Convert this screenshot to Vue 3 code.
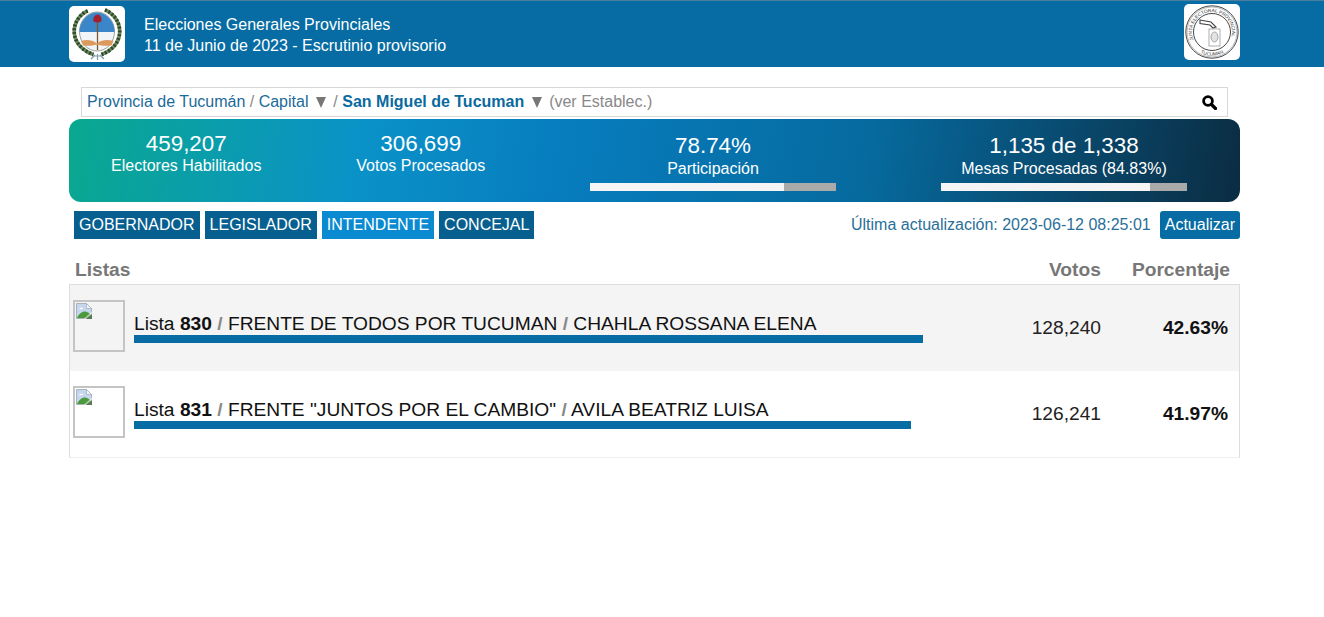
<script setup>
const stats = [
  { id: 'e', value: '459,207', label: 'Electores Habilitados', cls: 's1' },
  { id: 'v', value: '306,699', label: 'Votos Procesados', cls: 's2' },
  { id: 'p', value: '78.74%', label: 'Participación', cls: 's3', bar: 78.74 },
  { id: 'm', value: '1,135 de 1,338', label: 'Mesas Procesadas (84.83%)', cls: 's4', bar: 84.83 },
]
const tabs = [
  { t: 'GOBERNADOR' },
  { t: 'LEGISLADOR' },
  { t: 'INTENDENTE', active: true },
  { t: 'CONCEJAL' },
]
const rows = [
  { n: '830', party: 'FRENTE DE TODOS POR TUCUMAN', who: 'CHAHLA ROSSANA ELENA', votes: '128,240', pct: '42.63%', w: 789, alt: true },
  { n: '831', party: 'FRENTE "JUNTOS POR EL CAMBIO"', who: 'AVILA BEATRIZ LUISA', votes: '126,241', pct: '41.97%', w: 777, alt: false },
]
</script>

<template>
  <div class="page">
    <header class="top">
      <div class="wrap head">
        <div class="logo">
          <svg width="56" height="56" viewBox="0 0 56 56">
            <ellipse cx="28" cy="25.500" rx="17.500" ry="19.500" fill="#f2f5f7" stroke="#6a7a6a" stroke-width="0.7" />
            <path d="M10.500 26a17.500 19.500 0 0 1 35 0z" fill="#3a86c8" />
            <path d="M28.500 15v29" stroke="#7a5a2a" stroke-width="1.300" />
            <path d="M24.500 15.500c-.8-4 1.500-7 4-7s4.800 3 3.800 7c-2.500 1.200-5.300 1.200-7.800 0z" fill="#a3202c" />
            <path d="M12 35c5-1.500 11-1.500 16 2.500 5-4 11-4 16.500-2.500l-2 4.500c-5 .6-10 .5-14.500-1-4.500 1.500-9.500 1.600-14 1z" fill="#dd9a5e" />
            <g fill="none" stroke="#6f8a62" stroke-width="3.600">
              <path d="M18.700 4.800C9 9 3 20 6 31c2 8 10 15 18.500 17.500" />
              <path d="M36 3.800C46 8 53 19 50 31c-2 8-9 14.500-17.500 17.500" />
            </g>
            <g fill="none" stroke="#2f4a2a" stroke-width="3.600" stroke-dasharray="2 1.800">
              <path d="M18.700 4.800C9 9 3 20 6 31c2 8 10 15 18.500 17.500" />
              <path d="M36 3.800C46 8 53 19 50 31c-2 8-9 14.500-17.500 17.500" />
            </g>
            <g fill="none" stroke="#7f9aa8" stroke-width="1.200">
              <path d="M22 53l4-4M28.500 54v-6M35 53l-4-4M24 50h9" />
            </g>
          </svg>
        </div>
        <div class="title">
          <div>Elecciones Generales Provinciales</div>
          <div>11 de Junio de 2023 - Escrutinio provisorio</div>
        </div>
        <div class="logo logo-r">
          <svg width="56" height="56" viewBox="0 0 56 56">
            <defs>
              <path id="ringTop" d="M9.600 36A20 20 0 1 1 46.400 36" />
              <path id="ringBot" d="M15 48A24 24 0 0 0 41 48" />
            </defs>
            <circle cx="28" cy="28" r="26.200" fill="none" stroke="#333" stroke-width="0.900" />
            <circle cx="28" cy="28" r="25" fill="none" stroke="#777" stroke-width="0.500" />
            <circle cx="28" cy="28" r="18.500" fill="none" stroke="#333" stroke-width="0.900" />
            <text class="ring"><textPath href="#ringTop">JUNTA ELECTORAL PROVINCIAL</textPath></text>
            <text class="ring" text-anchor="middle"><textPath href="#ringBot" startOffset="50%">TUCUMAN</textPath></text>
            <path d="M16 16l11 2 5 5-3 1-3-3-10-1.500z" fill="#fff" stroke="#444" stroke-width="1.100" />
            <rect x="25" y="25" width="11" height="17" fill="#fff" stroke="#999" stroke-width="0.800" />
            <ellipse cx="30.500" cy="33" rx="3.500" ry="5" fill="#e2e2e2" stroke="#888" stroke-width="0.700" />
          </svg>
        </div>
      </div>
    </header>

    <main class="wrap">
      <div class="crumbs">
        <span class="path">Provincia de Tucumán <i>/</i> Capital <span class="tri"></span> <i>/</i> <b>San Miguel de Tucuman</b> <span class="tri"></span> <em>(ver Establec.)</em></span>
        <svg class="search" width="15" height="15" viewBox="0 0 15 15">
          <circle cx="6" cy="6" r="4.400" fill="none" stroke="#000" stroke-width="2.800" />
          <path d="M9.500 9.500l4 4" stroke="#000" stroke-width="3.200" stroke-linecap="round" />
        </svg>
      </div>

      <section class="band">
        <div v-for="s in stats" :key="s.id" class="stat" :class="s.cls">
          <div class="val">{{ s.value }}</div>
          <div class="lab">{{ s.label }}</div>
          <div v-if="s.bar" class="prog"><span :style="{ width: s.bar + '%' }"></span></div>
        </div>
      </section>

      <nav class="bar">
        <div class="tabs">
          <span v-for="t in tabs" :key="t.t" class="tab" :class="{ on: t.active }">{{ t.t }}</span>
        </div>
        <div class="upd">
          <span>Última actualización: 2023-06-12 08:25:01</span>
          <span class="btn">Actualizar</span>
        </div>
      </nav>

      <div class="cols">
        <span class="c1">Listas</span>
        <span class="c2">Votos</span>
        <span class="c3">Porcentaje</span>
      </div>

      <div class="table">
        <div v-for="r in rows" :key="r.n" class="row" :class="{ alt: r.alt }">
          <div class="img">
            <svg width="16" height="16" viewBox="0 0 16 16">
              <path d="M.5.500h10l5 5v10H.5z" fill="#c5d6ee" stroke="#a8b2bd" stroke-width="1" />
              <path d="M10.500.500v5h5z" fill="#f6f6f6" stroke="#a8b2bd" stroke-width="0.800" />
              <path d="M3 6c.8-1.600 3.500-1.800 4.500-.2C6 6.400 4.500 6.400 3 6z" fill="#fff" />
              <path d="M1 15c2-4.500 5.500-7 8.500-6.500 2 .3 4 2 5.500 3.500v3z" fill="#4a9a3c" />
              <path d="M7 16.500L16.500 8v8.500z" fill="#fff" opacity="0.550" />
              <path d="M9 16.500l7.500-6v6z" fill="#5a7a55" />
            </svg>
          </div>
          <div class="info">
            <div class="name">Lista <b>{{ r.n }}</b> <i>/</i> {{ r.party }} <i>/</i> {{ r.who }}</div>
            <div class="line" :style="{ width: r.w + 'px' }"></div>
          </div>
          <div class="votes">{{ r.votes }}</div>
          <div class="pct">{{ r.pct }}</div>
        </div>
      </div>
    </main>
  </div>
</template>

<style>
html, body { margin: 0; background: #fff; }
</style>

<style scoped>
.page {
  font-family: "Liberation Sans", Arial, sans-serif;
  min-height: 617px;
  background: #fff;
  overflow: hidden;
}
.wrap { width: 1171px; margin-left: 69px; }
.top { height: 66px; background: #066ca3; border-top: 1px solid #4b7f9e; }
.head { display: flex; align-items: flex-start; padding-top: 5px; }
.logo {
  width: 56px; height: 56px; background: #fff; border-radius: 5px; flex: none;
}
.logo svg { display: block; }
.logo-r { margin-left: auto; margin-top: -2px; }
.ring { font-size: 4.800px; fill: #333; font-family: "Liberation Sans", Arial, sans-serif; }
.title {
  margin-left: 19px; margin-top: 8px;
  color: #fff; font-size: 16px; line-height: 21px;
}
.crumbs {
  margin: 20px 12px 2px;
  height: 28px; border: 1px solid #d8d8d8; background: #fff;
  display: flex; align-items: center; justify-content: space-between;
  padding: 0 10px 0 5px;
  font-size: 16px; color: #1b6a99;
}
.crumbs i { font-style: normal; color: #888; }
.tri {
  display: inline-block; width: 0; height: 0; margin: 0 3px;
  border-left: 5.500px solid transparent; border-right: 5.500px solid transparent;
  border-top: 11px solid #777;
  vertical-align: -1px;
}
.crumbs b { color: #0a6a9e; }
.crumbs em { font-style: normal; color: #888; }
.search { display: block; }
.band {
  height: 83px; border-radius: 12px;
  background: linear-gradient(100deg, #0aa88f 0%, #0a92c8 25%, #077dbe 42%, #066a9e 68%, #0b2c42 100%);
  display: flex; color: #fff; text-align: center;
}
.stat { flex: none; padding-top: 12px; box-sizing: border-box; }
.s1, .s2 { width: 234.500px; }
.s3 { width: 350px; padding-top: 14px; }
.s4 { width: 352px; padding-top: 14px; }
.val { font-size: 22.400px; line-height: 25px; }
.lab { font-size: 16px; line-height: 19px; }
.s3 .lab, .s4 .lab { line-height: 22px; }
.prog { width: 246px; height: 8px; background: #aaa; margin: 3px auto 0; }
.prog span { display: block; height: 100%; background: #f5f5f5; }
.bar {
  display: flex; justify-content: space-between; align-items: center;
  margin-top: 9px; height: 28px;
}
.tabs { display: flex; gap: 5px; margin-left: 5px; }
.tab {
  height: 28px; line-height: 27px; padding: 0 5px; background: #075f8f; color: #fff; font-size: 16px;
}
.tab.on { background: #0a8ad0; }
.upd { display: flex; align-items: center; gap: 9px; color: #2a6f99; font-size: 16px; }
.btn {
  background: #066ca3; color: #fff; border-radius: 3px; height: 28px; line-height: 28px; padding: 0 5px;
}
.cols {
  display: flex; height: 45px; box-sizing: border-box; padding-top: 21px;
  font-size: 19.200px; font-weight: bold; color: #777; line-height: 20px;
}
.c1 { margin-left: 6px; flex: 1; }
.c2 { margin-right: 31px; }
.c3 { margin-right: 10px; }
.table {
  border: 1px solid #ddd; border-bottom-color: #eee;
}
.row {
  height: 86px; display: flex; align-items: flex-start; background: #fff;
}
.row.alt { background: #f4f4f4; }
.img {
  width: 48px; height: 48px; margin: 15px 0 0 3px; border: 2px solid #c4c4c4; flex: none;
}
.img svg { display: block; margin: 1px 0 0 1px; }
.info { margin-left: 9px; padding-top: 28px; flex: none; width: 856px; }
.name { font-size: 19.200px; line-height: 22px; color: #111; white-space: nowrap; }
.name i { font-style: normal; color: #888; font-weight: bold; }
.line { height: 8px; background: #066ca3; }
.votes { width: 111px; padding-top: 32px; text-align: right; font-size: 19.200px; line-height: 21px; color: #222; flex: none; }
.pct { width: 127px; padding-top: 32px; text-align: right; box-sizing: border-box; font-size: 19.200px; line-height: 21px; font-weight: bold; color: #111; flex: none; }
</style>
